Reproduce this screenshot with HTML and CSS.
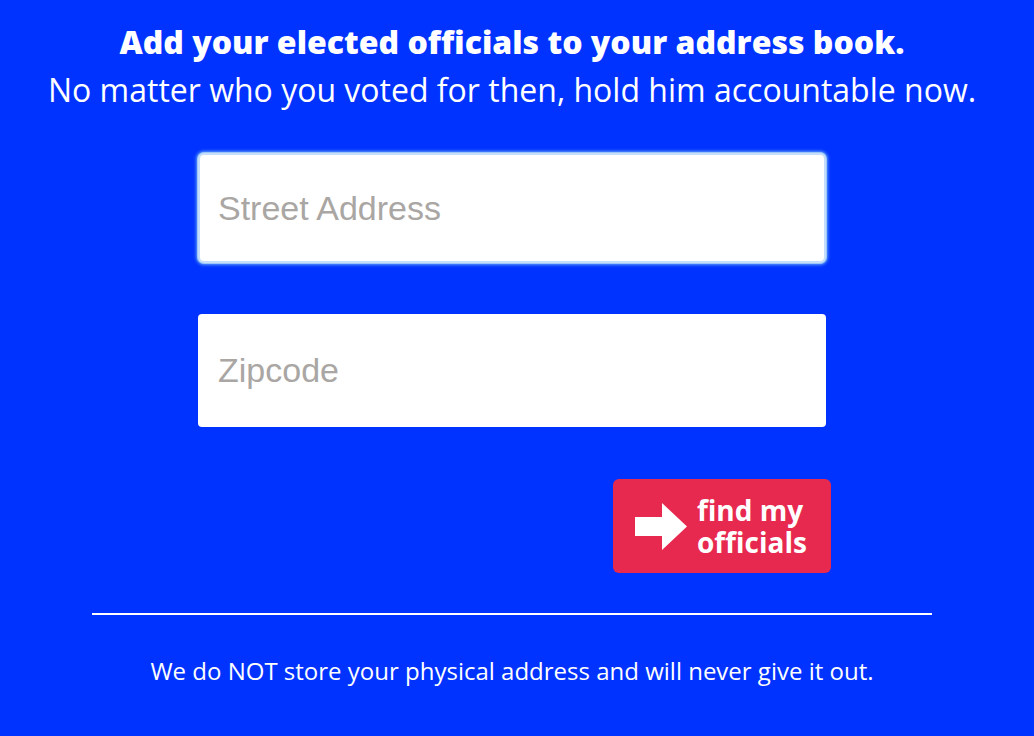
FILE: index.html
```html
<!DOCTYPE html>
<html>
<head>
<meta charset="utf-8">
<link rel="stylesheet" href="styles.css">
</head>
<body>
<div class="page">
  <header class="intro">
    <h1 class="title">Add your elected officials to your address book.</h1>
    <p class="subtitle">No matter who you voted for then, hold him accountable now.</p>
  </header>
  <form class="form">
    <input class="field field-focus" type="text" placeholder="Street Address">
    <input class="field" type="text" placeholder="Zipcode">
    <div class="actions">
      <button class="btn" type="button">
        <svg class="arrow" width="52" height="47" viewBox="0 0 52 47"><path d="M0 14 H27 V0 L52 23.5 L27 47 V33 H0 Z" fill="#fff"/></svg>
        <span class="btn-text"><span class="btn-line">find my</span><span class="btn-line">officials</span></span>
      </button>
    </div>
  </form>
  <hr class="rule">
  <p class="note">We do NOT store your physical address and will never give it out.</p>
</div>
</body>
</html>
```
FILE: styles.css
```css
html, body {
  margin: 0;
  padding: 0;
  background: #0033ff;
}
body {
  font-family: "Open Sans", sans-serif;
  color: #fff;
}
.page {
  width: 840px;
  margin-left: 92px;
  padding-top: 18px;
}
.intro {
  text-align: center;
}
.title {
  margin: 0;
  font-size: 32px;
  font-weight: 800;
  line-height: 48px;
  white-space: nowrap;
}
.subtitle {
  margin: 0 -50px;
  font-size: 32px;
  font-weight: 400;
  line-height: 48px;
  white-space: nowrap;
}
.form {
  display: flex;
  flex-direction: column;
  align-items: flex-start;
  padding-left: 106px;
  margin-top: 39px;
}
.field {
  box-sizing: border-box;
  width: 628px;
  height: 113px;
  border: none;
  border-radius: 4px;
  background: #fff;
  padding: 0 20px;
  font-family: "Liberation Sans", Arial, sans-serif;
  font-size: 34px;
  color: #333;
  outline: none;
}
.field::placeholder {
  color: #a9a6a3;
}
.field-focus {
  width: 624px;
  height: 106px;
  margin: 2px 0 53px 2px;
  padding-left: 18px;
  box-shadow: 0 0 0 2px #c5defb, 0 0 0 3px #9cc6f8, 0 0 3px 4px #5a98f7;
}
.actions {
  width: 633px;
  display: flex;
  justify-content: flex-end;
  margin-top: 52px;
}
.btn {
  width: 218px;
  height: 94px;
  background: #e8294f;
  border: none;
  border-radius: 6px;
  display: flex;
  align-items: center;
  padding: 0 0 0 22px;
  gap: 10px;
  font-family: "Open Sans", sans-serif;
  font-weight: 700;
  font-size: 28px;
  color: #fff;
  text-align: left;
}
.arrow {
  flex: none;
  margin-top: 1px;
}
.btn-text {
  display: flex;
  flex-direction: column;
  margin-top: -1px;
}
.btn-line {
  display: block;
  height: 32px;
  line-height: 32px;
}
.rule {
  margin: 40px 0 0;
  border: none;
  height: 2px;
  background: #fff;
}
.note {
  margin: 40px 0 0;
  text-align: center;
  font-size: 24px;
  line-height: 32px;
}
```
